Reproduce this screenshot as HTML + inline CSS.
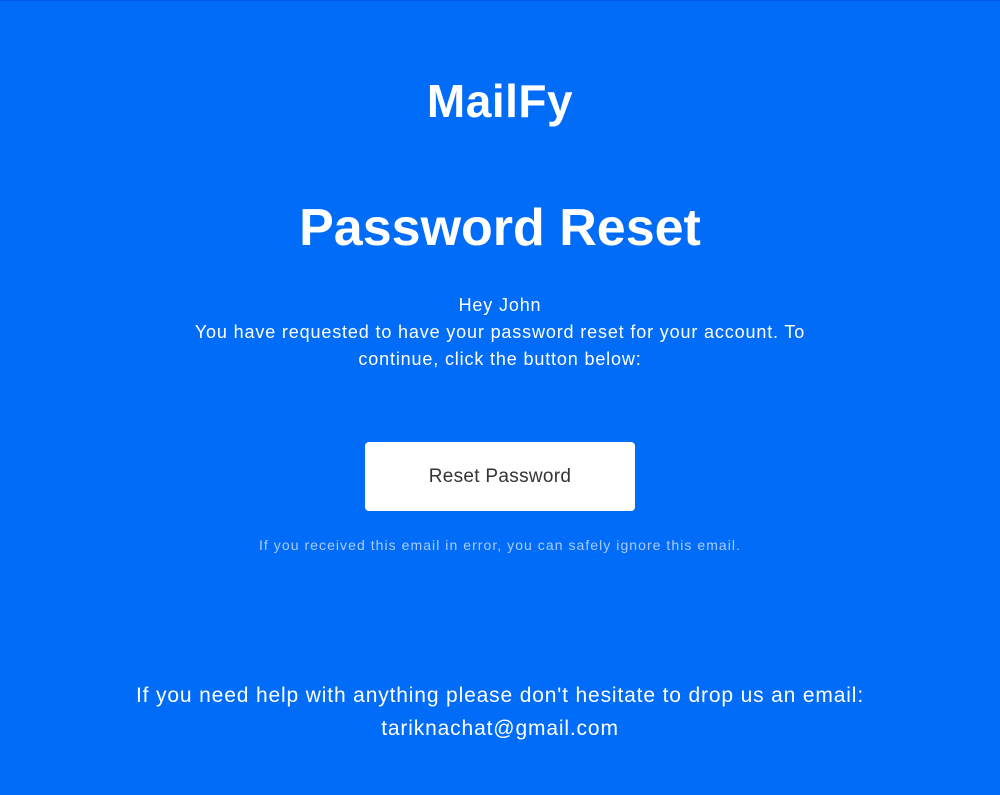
<!DOCTYPE html>
<html><head><meta charset="utf-8"><style>
html,body{margin:0;padding:0}
body{width:1000px;height:795px;background:#006cf7;border-top:1px solid #0056e0;box-sizing:border-box;position:relative;overflow:hidden;font-family:"Liberation Sans",sans-serif;color:#fff}
.c{position:absolute;left:0;width:1000px;text-align:center;white-space:nowrap}
.logo{top:72px;font-size:46px;font-weight:bold;letter-spacing:0.5px;line-height:56px}
.h1{top:197px;font-size:52px;font-weight:bold;line-height:60px}
.p{top:291px;font-size:18px;line-height:27px;letter-spacing:0.85px}
.btn{position:absolute;left:365px;top:441px;width:270px;height:69px;background:#fff;border-radius:4px;color:#333;font-size:19px;line-height:69px;text-align:center;letter-spacing:0.3px}
.small{top:535px;font-size:14px;color:#a9cbff;line-height:18px;letter-spacing:1.05px}
.foot{top:678px;font-size:21px;line-height:33px;letter-spacing:0.85px}
</style></head><body>
<div class="c logo">MailFy</div>
<div class="c h1">Password Reset</div>
<div class="c p">Hey John<br>You have requested to have your password reset for your account. To<br>continue, click the button below:</div>
<div class="btn">Reset Password</div>
<div class="c small">If you received this email in error, you can safely ignore this email.</div>
<div class="c foot">If you need help with anything please don't hesitate to drop us an email:<br>tariknachat@gmail.com</div>
</body></html>
